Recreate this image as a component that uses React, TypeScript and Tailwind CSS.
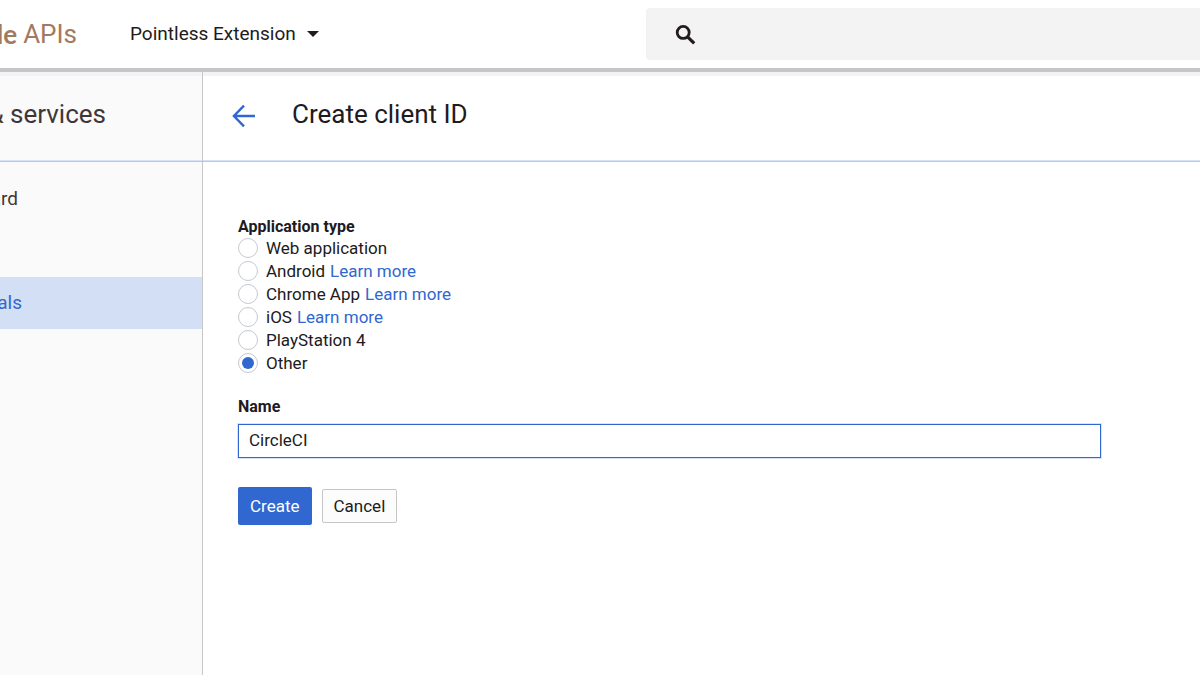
import { useState } from "react";

type AppType = { id: string; label: string; help?: boolean };

const appTypes: AppType[] = [
  { id: "web", label: "Web application" },
  { id: "android", label: "Android", help: true },
  { id: "chrome", label: "Chrome App", help: true },
  { id: "ios", label: "iOS", help: true },
  { id: "ps4", label: "PlayStation 4" },
  { id: "other", label: "Other" },
];

function Header() {
  return (
    <header className="flex h-[72px] items-center border-b-4 border-[#c6c6c6] bg-white">
      <a
        href="#home"
        className="flex w-[77px] shrink-0 items-center justify-end gap-[6px] overflow-hidden text-[26px] leading-8 whitespace-nowrap text-[#a17a5f]"
      >
        <span className="font-['Lato',sans-serif] font-bold">le</span>
        <span>APIs</span>
      </a>
      <button type="button" className="ml-[53px] flex shrink-0 items-center gap-[11px] text-[19px] leading-6">
        Pointless Extension
        <svg width="12" height="6" viewBox="0 0 12 6" fill="currentColor" aria-hidden="true">
          <path d="M0 0h12L6 6z" />
        </svg>
      </button>
      <label className="ml-auto flex h-[52px] w-[554px] items-center gap-4 rounded-l-sm bg-[#f3f3f3] pl-[29px]">
        <svg width="21" height="22" viewBox="0 0 21 22" fill="none" stroke="currentColor" aria-hidden="true">
          <circle cx="8.2" cy="9.4" r="6" strokeWidth="2.8" />
          <path d="M12.6 13.8l6.6 6.6" strokeWidth="3.2" />
        </svg>
        <input type="search" aria-label="Search" className="h-full min-w-0 flex-1 bg-transparent text-[17px] outline-none" />
      </label>
    </header>
  );
}

function Sidebar() {
  return (
    <aside className="w-[203px] shrink-0 border-r border-[#c6c6c6] bg-[#fafafa]">
      <div className="h-[90px] border-t-4 border-b border-t-[#f1f3f7] border-b-[#c0c8d8] pt-[22px] shadow-[inset_0_-1px_0_#d5e2f8]">
        <h2 className="flex w-[106px] justify-end overflow-hidden text-[26px] leading-8 whitespace-nowrap text-[#40363a]">
          &amp; services
        </h2>
      </div>
      <nav className="flex flex-col pt-[11px] text-[19px] leading-6">
        <a href="#dashboard" className="flex h-[52px] items-center text-[#40363a]">
          <span className="flex w-[18px] justify-end overflow-hidden">ard</span>
        </a>
        <a href="#credentials" className="mt-[52px] flex h-[52px] items-center bg-[#d3dff4] text-[#3367cf]">
          <span className="flex w-[22px] justify-end overflow-hidden">als</span>
        </a>
      </nav>
    </aside>
  );
}

function ClientForm() {
  const [selected, setSelected] = useState("other");
  const [name, setName] = useState("CircleCI");
  return (
    <form className="pt-[55px] pr-[99px] pl-[35px] text-[17px]" onSubmit={(e) => e.preventDefault()}>
      <fieldset>
        <legend className="text-base leading-5 font-bold">Application type</legend>
        {appTypes.map((type) => (
          <div key={type.id} className="flex h-[23px] items-start leading-[23px]">
            <input
              type="radio"
              id={type.id}
              name="app-type"
              checked={selected === type.id}
              onChange={() => setSelected(type.id)}
              className="mt-px mr-2 h-5 w-5 shrink-0 appearance-none rounded-full border border-[#c3c8d2] bg-white bg-clip-content p-[3px] checked:bg-[#3067d0]"
            />
            <label htmlFor={type.id}>{type.label}</label>
            {type.help && (
              <a href={"#" + type.id} className="ml-[5px] text-[#3067d0]">
                Learn more
              </a>
            )}
          </div>
        ))}
      </fieldset>
      <label htmlFor="client-name" className="mt-[22px] block text-base leading-5 font-bold">
        Name
      </label>
      <input
        id="client-name"
        type="text"
        value={name}
        onChange={(e) => setName(e.target.value)}
        className="mt-[7px] block h-[34px] w-full border border-[#3067d0] bg-white px-[10px] pb-[2px] shadow-[0_0_0_1px_#d8e3f7] outline-none"
      />
      <div className="mt-[29px] flex items-center gap-[10px] leading-6">
        <button type="submit" className="h-[38px] rounded-xs bg-[#3067d0] px-3 text-white">
          Create
        </button>
        <button type="button" className="h-[34px] rounded-xs border border-[#c6c6c6] bg-[#fcfcfc] px-[11px]">
          Cancel
        </button>
      </div>
    </form>
  );
}

export default function App() {
  return (
    <div className="flex min-h-screen flex-col overflow-hidden bg-white font-['Roboto',sans-serif] text-[#211a20]">
      <Header />
      <div className="flex flex-1">
        <Sidebar />
        <main className="min-w-0 flex-1">
          <div className="flex h-[90px] gap-[37px] border-t-4 border-b border-t-[#f1f3f7] border-b-[#c0c8d8] pt-[22px] pl-7 shadow-[inset_0_-1px_0_#d5e2f8]">
            <a href="#back" aria-label="Back" className="flex h-9 items-center text-[#3067d0]">
              <svg width="24" height="24" viewBox="0 0 24 24" fill="none" stroke="currentColor" strokeWidth="2.4" aria-hidden="true">
                <path d="M24 12H3M13 1.7L2.9 12L13 22.3" />
              </svg>
            </a>
            <h1 className="text-[26px] leading-8">Create client ID</h1>
          </div>
          <ClientForm />
        </main>
      </div>
    </div>
  );
}
